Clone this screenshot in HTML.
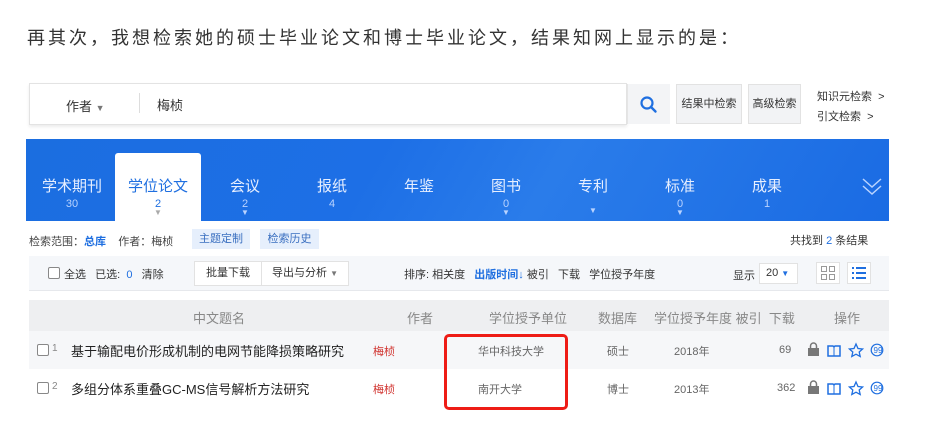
<!DOCTYPE html>
<html><head><meta charset="utf-8">
<style>
*{margin:0;padding:0;box-sizing:border-box}
body{width:927px;height:436px;background:#fff;font-family:"Liberation Sans","Noto Sans CJK SC",sans-serif;color:#333;position:relative;overflow:hidden}
.a{position:absolute;white-space:nowrap}
.h{left:27px;top:24px;font-size:18px;letter-spacing:3px;color:#333}
.sb{left:29px;top:83px;width:598px;height:42px;background:#fff;border:1px solid #e3e3e3;box-shadow:0 2px 3px rgba(0,0,0,.08)}
.band{left:26px;top:139px;width:863px;height:82px;background:linear-gradient(120deg,#1b6ee0 0%,#1d6fe6 40%,#2a7cea 60%,#1a6be3 100%)}
.tab{position:absolute;top:36px;width:86px;text-align:center;color:#e7efff;font-size:15px}
.tab small{display:block;font-size:11px;color:#b9d3ff;margin-top:2px}
.f12{font-size:11px}
.btn{background:#f2f3f5;border:1px solid #e2e2e2;font-size:11px;text-align:center;line-height:38px}
</style></head><body>
<div class="a h">再其次，我想检索她的硕士毕业论文和博士毕业论文，结果知网上显示的是：</div>

<div class="a sb"></div>
<div class="a" style="left:66px;top:96px;font-size:13px;color:#333">作者 <span style="font-size:9px;color:#777">▼</span></div>
<div class="a" style="left:139px;top:93px;width:1px;height:20px;background:#ddd"></div>
<div class="a" style="left:157px;top:95px;font-size:13px;color:#333">梅桢</div>
<div class="a" style="left:627px;top:84px;width:43px;height:40px;background:#f3f4f6;border-left:1px solid #e5e5e5"></div>
<svg class="a" style="left:639px;top:95px" width="20" height="20" viewBox="0 0 20 20"><circle cx="8" cy="8" r="5.5" fill="none" stroke="#1f6fe0" stroke-width="2.2"/><path d="M12 12l4.5 4.5" stroke="#1f6fe0" stroke-width="2.4" stroke-linecap="round"/></svg>
<div class="a btn" style="left:676px;top:84px;width:66px;height:40px">结果中检索</div>
<div class="a btn" style="left:748px;top:84px;width:53px;height:40px">高级检索</div>
<div class="a f12" style="left:817px;top:88px;color:#333">知识元检索 &nbsp;&gt;</div>
<div class="a f12" style="left:817px;top:108px;color:#333">引文检索 &nbsp;&gt;</div>

<div class="a band">
 <div style="position:absolute;left:89px;top:14px;width:86px;height:68px;background:#fff;border-radius:3px 3px 0 0"></div>
 <div class="tab" style="left:3px">学术期刊<small>30</small></div>
 <div class="tab" style="left:89px;color:#1f6fe0">学位论文<small style="color:#1f6fe0">2</small><small style="color:#aaa;font-size:8px;margin-top:-2px">▼</small></div>
 <div class="tab" style="left:176px">会议<small>2</small><small style="font-size:8px;margin-top:-2px">▼</small></div>
 <div class="tab" style="left:263px">报纸<small>4</small></div>
 <div class="tab" style="left:350px">年鉴</div>
 <div class="tab" style="left:437px">图书<small>0</small><small style="font-size:8px;margin-top:-2px">▼</small></div>
 <div class="tab" style="left:524px">专利<small style="font-size:8px;margin-top:10px">▼</small></div>
 <div class="tab" style="left:611px">标准<small>0</small><small style="font-size:8px;margin-top:-2px">▼</small></div>
 <div class="tab" style="left:698px">成果<small>1</small></div>
 <svg style="position:absolute;left:835px;top:36px" width="22" height="22" viewBox="0 0 22 22"><path d="M2 4l9 8 9-8M2 11l9 8 9-8" fill="none" stroke="#b9d3ff" stroke-width="1.5"/></svg>
</div>

<div class="a f12" style="left:29px;top:233px;color:#444">检索范围：<b style="color:#1f6fe0">总库</b> &nbsp;&nbsp;&nbsp;作者：梅桢</div>
<div class="a f12" style="left:192px;top:229px;width:58px;height:20px;background:#e6effc;color:#3a6fc0;text-align:center;line-height:20px">主题定制</div>
<div class="a f12" style="left:260px;top:229px;width:59px;height:20px;background:#e6effc;color:#3a6fc0;text-align:center;line-height:20px">检索历史</div>
<div class="a f12" style="left:790px;top:232px;color:#333">共找到 <span style="color:#1f6fe0">2</span> 条结果</div>

<div class="a" style="left:29px;top:256px;width:860px;height:35px;background:#f5f7fa;border-bottom:1px solid #e6e8ec"></div>
<div class="a" style="left:48px;top:267px;width:12px;height:12px;border:1px solid #888;border-radius:2px;background:#fff"></div>
<div class="a f12" style="left:64px;top:266px">全选 &nbsp;&nbsp;已选: &nbsp;<span style="color:#1f6fe0">0</span> &nbsp;&nbsp;清除</div>
<div class="a f12" style="left:194px;top:261px;width:68px;height:25px;background:#fff;border:1px solid #e2e2e2;line-height:23px;text-align:center">批量下载</div>
<div class="a f12" style="left:261px;top:261px;width:88px;height:25px;background:#fff;border:1px solid #e2e2e2;line-height:23px;text-align:center">导出与分析 <span style="font-size:8px;color:#777">▼</span></div>
<div class="a f12" style="left:404px;top:266px">排序: 相关度 &nbsp;&nbsp;<b style="color:#1f6fe0">出版时间</b><span style="color:#1f6fe0">↓</span> 被引 &nbsp;&nbsp;下载 &nbsp;&nbsp;学位授予年度</div>
<div class="a f12" style="left:733px;top:267px">显示</div>
<div class="a f12" style="left:759px;top:263px;width:39px;height:21px;background:#fff;border:1px solid #e2e2e2;line-height:19px;padding-left:6px">20 <span style="font-size:8px;color:#1f6fe0">▼</span></div>
<div class="a" style="left:816px;top:262px;width:24px;height:22px;border:1px solid #e2e2e2;background:#fff"></div>
<svg class="a" style="left:820px;top:265px" width="16" height="16"><g fill="none" stroke="#999"><rect x="1.5" y="1.5" width="5" height="5"/><rect x="9.5" y="1.5" width="5" height="5"/><rect x="1.5" y="9.5" width="5" height="5"/><rect x="9.5" y="9.5" width="5" height="5"/></g></svg>
<div class="a" style="left:847px;top:262px;width:24px;height:22px;border:1px solid #e2e2e2;background:#fff"></div>
<svg class="a" style="left:851px;top:265px" width="16" height="16"><g stroke="#1f6fe0" stroke-width="2"><path d="M1 3h2M5 3h10M1 8h2M5 8h10M1 13h2M5 13h10"/></g></svg>

<div class="a" style="left:29px;top:300px;width:860px;height:31px;background:#eeeff1"></div>
<div class="a" style="left:29px;top:331px;width:860px;height:38px;background:#f6f7f9"></div>
<div class="a" style="top:308px;left:193px;font-size:13px;color:#888">中文题名</div>
<div class="a" style="top:308px;left:407px;font-size:13px;color:#888">作者</div>
<div class="a" style="top:308px;left:489px;font-size:13px;color:#888">学位授予单位</div>
<div class="a" style="top:308px;left:598px;font-size:13px;color:#888">数据库</div>
<div class="a" style="top:308px;left:654px;font-size:13px;color:#888">学位授予年度 被引 &nbsp;下载</div>
<div class="a" style="top:308px;left:834px;font-size:13px;color:#888">操作</div>

<div class="a" style="left:37px;top:344px;width:12px;height:12px;border:1px solid #888;border-radius:2px;background:#fff"></div>
<div class="a f12" style="left:52px;top:343px;color:#888;font-size:10px">1</div>
<div class="a" style="left:71px;top:341px;font-size:13px;color:#222">基于输配电价形成机制的电网节能降损策略研究</div>
<div class="a f12" style="left:373px;top:343px;color:#d0312d">梅桢</div>
<div class="a f12" style="left:478px;top:343px;color:#666">华中科技大学</div>
<div class="a f12" style="left:607px;top:343px;color:#666">硕士</div>
<div class="a f12" style="left:674px;top:343px;color:#666">2018年</div>
<div class="a f12" style="left:779px;top:344px;color:#666">69</div>

<div class="a" style="left:37px;top:382px;width:12px;height:12px;border:1px solid #888;border-radius:2px;background:#fff"></div>
<div class="a f12" style="left:52px;top:381px;color:#888;font-size:10px">2</div>
<div class="a" style="left:71px;top:379px;font-size:13px;color:#222">多组分体系重叠GC-MS信号解析方法研究</div>
<div class="a f12" style="left:373px;top:381px;color:#d0312d">梅桢</div>
<div class="a f12" style="left:478px;top:381px;color:#666">南开大学</div>
<div class="a f12" style="left:607px;top:381px;color:#666">博士</div>
<div class="a f12" style="left:674px;top:381px;color:#666">2013年</div>
<div class="a f12" style="left:777px;top:382px;color:#666">362</div>

<svg class="a" style="left:806px;top:342px" width="80" height="60">
 <g id="r">
 <rect x="2" y="6" width="11" height="8" fill="#777"/><path d="M4.5 6V4a3 3 0 0 1 6 0v2" fill="none" stroke="#777" stroke-width="1.5"/>
 <path d="M22 4h5l1 1 1-1h5v10h-12z" fill="none" stroke="#1f6fe0" stroke-width="1.5"/><path d="M28 5v9" stroke="#1f6fe0"/>
 <path d="M50 2l2 4.5 4.6.5-3.4 3 1 4.5-4.2-2.3-4.2 2.3 1-4.5-3.4-3 4.6-.5z" fill="none" stroke="#1f6fe0" stroke-width="1.3"/>
 <circle cx="71" cy="8" r="5.8" fill="none" stroke="#1f6fe0" stroke-width="1.2"/><text x="67.5" y="11" font-size="8" fill="#1f6fe0" font-family="Liberation Sans">99</text>
 </g>
 <use href="#r" y="38"/>
</svg>

<div class="a" style="left:444px;top:334px;width:124px;height:76px;border:3px solid #ee1c16;border-radius:5px"></div>
</body></html>
